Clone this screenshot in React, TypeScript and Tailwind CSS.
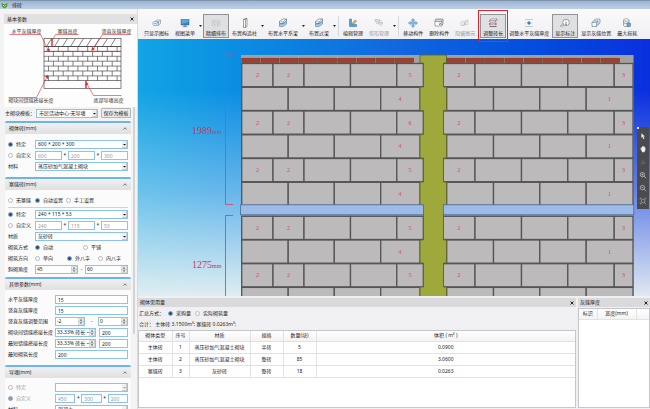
import React from 'react';

interface ChildrenProps {
  children: React.ReactNode;
}

/* ---------- Small form controls ---------- */

interface RadioProps {
  name: string;
  label: string;
  checked?: boolean;
  disabled?: boolean;
}

function Radio({ name, label, checked, disabled }: RadioProps) {
  return (
    <label className={disabled ? 'flex items-center gap-[3px] text-[#999]' : 'flex items-center gap-[3px]'}>
      <input
        type="radio"
        name={name}
        defaultChecked={checked}
        disabled={disabled}
        className="h-[5px] w-[5px] shrink-0 appearance-none rounded-full border border-[#b4bac0] bg-white checked:border-[#8ea9c2] checked:bg-[#1b4f7d] disabled:checked:bg-[#999]"
      />
      {label}
    </label>
  );
}

interface SelectProps {
  label: string;
  value: string;
  disabled?: boolean;
}

function Select({ label, value, disabled }: SelectProps) {
  return (
    <div className="relative min-w-0 flex-1">
      <select
        aria-label={label}
        disabled={disabled}
        className="block h-[9px] w-full appearance-none border border-[#8cc3ec] bg-white pl-[2px] text-[#222] disabled:opacity-100"
      >
        <option>{value}</option>
      </select>
      <svg viewBox="0 0 10 14" className="pointer-events-none absolute top-[1px] right-[1px] h-[7px] w-[5px]">
        <rect width="10" height="14" fill="#f0f0f0" />
        <path d="M9.5 0V13.5H0" fill="none" stroke="#8a9199" />
        <path d="M2 6H8L5 9Z" fill={disabled ? '#999' : '#111'} />
      </svg>
    </div>
  );
}

interface TextInputProps {
  label: string;
  value: string;
  disabled?: boolean;
}

function TextInput({ label, value, disabled }: TextInputProps) {
  return (
    <input
      type="text"
      aria-label={label}
      defaultValue={value}
      disabled={disabled}
      className="h-[9px] w-0 min-w-0 flex-1 border border-[#8cc3ec] bg-white px-[2px] text-[#222] disabled:text-[#999]"
    />
  );
}

function Spinner({ label, value }: TextInputProps) {
  return (
    <div className="flex h-[9px] min-w-0 flex-1 border border-[#8cc3ec] bg-white">
      <input type="text" aria-label={label} defaultValue={value} className="w-0 min-w-0 flex-1 bg-transparent pl-px" />
      <button type="button" aria-label={`${label} 增减`} className="w-[6px] shrink-0">
        <svg viewBox="0 0 12 14" className="h-[7px] w-[6px]">
          <path d="M.5.5H11.5V13.5H.5ZM0 7H12" fill="#f4f4f4" stroke="#a6adb5" />
          <path d="M6 2.5L9 5H3ZM6 11.5L9 9H3Z" fill="#333" />
        </svg>
      </button>
    </div>
  );
}

function Triple({ label, values }: { label: string; values: string[] }) {
  return (
    <div className="flex min-w-0 flex-1 items-center">
      {values.map((v, i) => (
        <React.Fragment key={i}>
          {i > 0 && <span className="w-[6px] text-center">*</span>}
          <TextInput label={`${label} ${i + 1}`} value={v} disabled />
        </React.Fragment>
      ))}
    </div>
  );
}

/* ---------- Left parameter panel ---------- */

function Row({ children }: ChildrenProps) {
  return <div className="flex h-[11px] items-center">{children}</div>;
}

function Name({ children }: ChildrenProps) {
  return <div className="w-[27px] shrink-0">{children}</div>;
}

function WideName({ children }: ChildrenProps) {
  return <div className="w-[47px] shrink-0">{children}</div>;
}

interface CardProps extends ChildrenProps {
  title: string;
  className: string;
}

function Card({ title, className, children }: CardProps) {
  return (
    <section className="shrink-0 rounded-t-[2px] border-t-2 border-[#6db4ee] bg-[#fbfbfb]">
      <button
        type="button"
        className="flex h-[11px] w-full items-center justify-between bg-linear-to-b from-[#f0f0f0] to-[#e0e0e1] px-1"
      >
        {title}
        <svg viewBox="0 0 8 6" className="h-[3px] w-1">
          <path d="M1 5L4 1.5L7 5" fill="none" stroke="#444" strokeWidth="1.4" />
        </svg>
      </button>
      <div className={className}>{children}</div>
    </section>
  );
}

function WallDiagram() {
  const hatch = [46, 54, 62, 70, 78, 86, 94, 102, 110];
  const courses = [0, 1, 2, 3, 4, 5, 6];
  const joints = [0, 1, 2, 3, 4, 5, 6, 7];
  return (
    <svg viewBox="4 24 132 83" className="block h-[83px] w-full shrink-0 bg-[#fdfdfd]">
      <g fill="none" stroke="#333" strokeWidth="0.6">
        <rect x="43.5" y="38.5" width="77" height="50" />
        <path d="M43.5 46.5H120.5M43.5 80.5H120.5" />
        {hatch.map((x) => (
          <path key={x} d={`M${x} 46.5L${x + 5} 38.5`} />
        ))}
        {courses.map((c) => (
          <path key={c} d={`M43.5 ${46.5 + c * 4.9}H120.5`} />
        ))}
        {courses.map((c) =>
          joints.map((j) => {
            const x = 48 + j * 9.8 + (c % 2) * 4.9;
            return x < 120 ? <path key={`${c}-${j}`} d={`M${x} ${46.5 + c * 4.9}v4.9`} /> : null;
          })
        )}
      </g>
      <g fill="none" stroke="#e0262e" strokeWidth="0.8">
        <path d="M43.5 51.4H120.5" />
        <path d="M9 34.5H40L48 51" strokeWidth="0.6" />
        <path d="M78 34.5H55L51.5 41" strokeWidth="0.6" />
        <path d="M130 34.5H102L92 50" strokeWidth="0.6" />
        <path d="M8 97.5H36L47 76" strokeWidth="0.6" />
        <path d="M121 95.5H93L86 83" strokeWidth="0.6" />
        <path d="M51.5 38.5V46.5M85.5 80.5V88.5" strokeWidth="1.4" />
      </g>
      <path d="M48.5 52.5L46 49.5L49.5 49ZM91 51L91.5 47L94.5 49ZM47.5 75L44.5 76.5L47.5 79ZM85.5 82L85 85.5L88 84Z" fill="#e0262e" />
      <g fill="#333" fontSize="5">
        <text x="11" y="33">水平灰缝厚度</text>
        <text x="57" y="33">塞缝高度</text>
        <text x="101" y="33">竖直灰缝厚度</text>
        <text x="8" y="102">砌块间错缝搭接长度</text>
        <text x="93" y="102">底部导墙高度</text>
      </g>
    </svg>
  );
}

function ParameterPanel() {
  return (
    <aside className="flex w-[138px] shrink-0 flex-col overflow-hidden border-r border-[#d5dbe2] bg-[#f3f3f4] pt-[5px] pl-1">
      <header className="flex h-[10px] shrink-0 items-center justify-between bg-[#e1e1e2] pr-[3px] pl-[3px]">
        <h2>基本参数</h2>
        <button type="button" aria-label="关闭基本参数">
          <CloseIcon />
        </button>
      </header>
      <WallDiagram />
      <div className="flex min-h-0 flex-1">
        <div className="flex min-h-0 min-w-0 flex-1 flex-col overflow-hidden pl-px">
          <div className="flex h-[14px] shrink-0 items-center pb-[2px]">
            <span className="w-[31px] shrink-0">主砌块模板：</span>
            <Select label="主砌块模板" value="市民活动中心-无导墙" />
            <button type="button" className="ml-[3px] h-[10px] w-[30px] shrink-0 rounded-[1px] border border-[#b5b5b5] bg-[#ededed]">
              保存为模板
            </button>
          </div>

          <Card title="砌体砖(mm)" className="px-[3px] pt-[5px] pb-[5px]">
            <Row>
              <Name><Radio name="block" label="特定" checked /></Name>
              <Select label="砌体砖规格" value="600 * 200 * 300" />
            </Row>
            <Row>
              <Name><Radio name="block" label="自定义" /></Name>
              <Triple label="砌体砖自定义" values={['600', '200', '300']} />
            </Row>
            <Row>
              <Name>材料</Name>
              <Select label="材料" value="蒸压砂加气混凝土砌块" />
            </Row>
          </Card>

          <Card title="塞缝砖(mm)" className="px-[3px] pt-[5px] pb-[2px]">
            <Row>
              <div className="grid grid-cols-[27px_31px_auto]">
                <Radio name="fill" label="无塞缝" />
                <Radio name="fill" label="自动设置" checked />
                <Radio name="fill" label="手工设置" />
              </div>
            </Row>
            <hr className="my-px border-[#e3c9cf]" />
            <Row>
              <Name><Radio name="fillSize" label="特定" checked /></Name>
              <Select label="塞缝砖规格" value="240 * 115 * 53" />
            </Row>
            <Row>
              <Name><Radio name="fillSize" label="自定义" /></Name>
              <Triple label="塞缝砖自定义" values={['240', '115', '53']} />
            </Row>
            <Row>
              <Name>材质</Name>
              <Select label="材质" value="灰砂砖" />
            </Row>
            <Row>
              <Name>砌筑方式</Name>
              <div className="grid grid-cols-[48px_auto]">
                <Radio name="mode" label="自动" checked />
                <Radio name="mode" label="平铺" />
              </div>
            </Row>
            <Row>
              <Name>砌筑方向</Name>
              <div className="grid grid-cols-[32px_31px_auto]">
                <Radio name="direction" label="单向" />
                <Radio name="direction" label="外八字" checked />
                <Radio name="direction" label="内八字" />
              </div>
            </Row>
            <Row>
              <Name>斜砌角度</Name>
              <Spinner label="斜砌角度最小" value="45" />
              <span className="w-[7px] text-center">-</span>
              <Spinner label="斜砌角度最大" value="60" />
            </Row>
          </Card>

          <Card title="其他参数(mm)" className="px-[3px] pt-1 pb-[5px]">
            <Row>
              <WideName>水平灰缝厚度</WideName>
              <TextInput label="水平灰缝厚度" value="15" />
            </Row>
            <Row>
              <WideName>竖直灰缝厚度</WideName>
              <TextInput label="竖直灰缝厚度" value="15" />
            </Row>
            <Row>
              <WideName>竖直灰缝调整范围</WideName>
              <Spinner label="竖直灰缝调整下限" value="-2" />
              <span className="w-[13px] text-center">-</span>
              <Spinner label="竖直灰缝调整上限" value="0" />
            </Row>
            <Row>
              <WideName>砌块间错缝搭接长度</WideName>
              <div className="flex w-[41px]"><Spinner label="砌块间错缝搭接比例" value="33.33% 砖长 ~" /></div>
              <div className="ml-[3px] flex flex-1"><TextInput label="砌块间错缝搭接长度" value="200" /></div>
            </Row>
            <Row>
              <WideName>最短错缝搭接长度</WideName>
              <div className="flex w-[41px]"><Spinner label="最短错缝搭接比例" value="33.33% 砖长 ~" /></div>
              <div className="ml-[3px] flex flex-1"><TextInput label="最短错缝搭接长度" value="200" /></div>
            </Row>
            <Row>
              <WideName>最短砌筑长度</WideName>
              <TextInput label="最短砌筑长度" value="200" />
            </Row>
          </Card>

          <Card title="导墙(mm)" className="px-[3px] pt-1 pb-[5px]">
            <Row>
              <WideName><Radio name="guide" label="特定" disabled /></WideName>
              <Select label="导墙规格" value="" disabled />
            </Row>
            <Row>
              <WideName><Radio name="guide" label="自定义" checked disabled /></WideName>
              <Triple label="导墙自定义" values={['450', '300', '200']} />
            </Row>
            <Row>
              <WideName>材料</WideName>
              <Select label="导墙材料" value="混凝土" />
            </Row>
          </Card>
        </div>
        <div className="w-[6px] shrink-0 px-[2px]">
          <div className="h-3/4 rounded-full bg-[#d3d4d6]" />
        </div>
      </div>
    </aside>
  );
}

/* ---------- Toolbar ---------- */

function CloseIcon() {
  return (
    <svg viewBox="0 0 8 8" className="h-1 w-1">
      <path d="M1 1L7 7M7 1L1 7" stroke="#111" strokeWidth="1.8" />
    </svg>
  );
}

const beamIcon = (
  <>
    <path d="M3 7L10 2H17L10 8H3Z" fill="#fff" stroke="#3b4650" />
    <path d="M3 7V11H10V8M10 11L17 6V2" fill="#dfe9f1" stroke="#3b4650" />
    <path d="M3 12L10 12L17 7V12L10 17H3Z" fill="#a9cdea" stroke="#2873ad" />
  </>
);

const icons: Record<string, React.ReactNode> = {
  iconsOnly: (
    <>
      <path d="M5 8L9 4H17V11L13 15H5Z" fill="#e9eff5" stroke="#6b7d8d" />
      <path d="M5 8H13V15M13 8L17 4" stroke="#6b7d8d" />
      <circle cx="6" cy="11" r="4.5" fill="#e6f0f8" stroke="#628fb3" />
      <path d="M3.5 11H8.5M10 6L14 11" stroke="#2e76ad" />
    </>
  ),
  view: (
    <>
      <rect x="2" y="3" width="16" height="11" fill="#2f86c9" stroke="#56616b" />
      <path d="M3 4H17V8L3 12Z" fill="#58a8e2" stroke="none" />
      <path d="M8 14H12V17H8ZM5 17.5H15" stroke="#56616b" />
    </>
  ),
  fine: (
    <>
      <rect x="2" y="4" width="16" height="12" stroke="#b3bcc4" strokeDasharray="2 1" />
      <path d="M2 8H18M2 12H18M7 4V8M13 4V8M5 8V12M10 8V12M15 8V12M7 12V16M13 12V16" stroke="#aab8c4" strokeDasharray="2 1" />
    </>
  ),
  column: <path d="M7 3L10 1H14V17L11 19H7ZM7 3H11V19M11 3L14 1" fill="#fff" stroke="#444" />,
  beam: beamIcon,
  edit: (
    <>
      <path d="M3 2V17H17V13H7V2Z" fill="#5aa0d6" stroke="#2871a8" />
      <path d="M9 10L14 4L17 6L12 12L9 12.5Z" fill="#ecc06c" stroke="#73624a" />
    </>
  ),
  rect: (
    <>
      <path d="M2 3H11V7H2ZM8 9H17V12H8Z" fill="#e3e3e3" stroke="#aaa" />
      <path d="M5 7V11H8M11 5H15V9M14 12V17" stroke="#b5b5b5" />
    </>
  ),
  move: (
    <path
      d="M10 1L13 4.5H11.2V8.8H15.5V7L19 10L15.5 13V11.2H11.2V15.5H13L10 19L7 15.5H8.8V11.2H4.5V13L1 10L4.5 7V8.8H8.8V4.5H7Z"
      fill="#a8d2ef"
      stroke="#1e73b4"
    />
  ),
  remove: (
    <>
      <path d="M2 4H16V16H2ZM2 7H16" fill="#fff" stroke="#4d5660" />
      <path d="M2 4L4 2H18V12L16 14" stroke="#4d5660" />
      <path d="M10 9L15 14M15 9L10 14" stroke="#dc3a32" strokeWidth="1.6" />
    </>
  ),
  hide: (
    <>
      <path d="M2 7H9V15H2ZM11 5H16V13H11Z" fill="#ededed" stroke="#bbb" />
      <path d="M5 16L16 3M8 12L12 14" stroke="#aaa" />
    </>
  ),
  length: (
    <>
      <path d="M3 5L6 2H18V5L15 8H3ZM15 5L18 2" fill="#fff" stroke="#4d5660" />
      <path d="M3 5H15V8" stroke="#4d5660" />
      <path d="M2 12H17M5 10L2 12L5 14M14 10L17 12L14 14" stroke="#dc3a32" strokeWidth="1.4" />
      <path d="M3 17H17" stroke="#4d5660" strokeWidth="1.6" />
    </>
  ),
  joint: (
    <>
      <path d="M2 3H18M2 17H18" stroke="#8ba0b2" />
      <path d="M10 6L14 10L10 14L6 10Z" fill="#2f83c2" stroke="#7db7df" />
      <path d="M2 10H5M15 10H18" stroke="#a3bacb" />
    </>
  ),
  info: (
    <>
      <circle cx="12" cy="9" r="6.5" fill="#fff" stroke="#46525d" />
      <path d="M12 8V13M12 5V6.5M10.5 13H13.5" stroke="#46525d" strokeWidth="1.4" />
      <path d="M1 16H7M3 13L1 16L3 18M6 10V16" stroke="#5c88a9" />
    </>
  ),
  position: (
    <>
      <path d="M6 5L9 2H18V10L15 13H6Z" fill="#dcebf6" stroke="#4d6b84" />
      <path d="M2 9L5 6H14V14L11 17H2Z" fill="#f7fafc" stroke="#3c5e79" />
      <path d="M2 9H11V17M11 9L14 6" stroke="#3c5e79" />
    </>
  ),
  loss: (
    <>
      <path d="M3 4V15C3 18 14 18 14 15V4" fill="#eceff1" stroke="#59636c" />
      <ellipse cx="8.5" cy="4" rx="5.5" ry="2.4" fill="#fff" stroke="#59636c" />
      <path d="M3 9C4 11.5 13 11.5 14 9" stroke="#59636c" />
      <rect x="10" y="10" width="7" height="7" rx="1" fill="#69a7d4" stroke="#2c6fa2" />
    </>
  ),
};

interface ToolProps {
  icon: string;
  label: string;
  active?: boolean;
  disabled?: boolean;
  menu?: boolean;
  highlighted?: boolean;
}

function Tool({ icon, label, active, disabled, menu, highlighted }: ToolProps) {
  const base = 'relative flex h-[24px] shrink-0 flex-col items-center justify-between border px-[2px] pt-[3px] whitespace-nowrap';
  const look = active ? 'border-[#8f9396] bg-[#dfe0e2]' : 'border-transparent';
  return (
    <>
      <button type="button" disabled={disabled} className={`${base} ${look} ${disabled ? 'text-[#999]' : 'text-[#222]'}`}>
        <svg viewBox="0 0 20 20" fill="none" className="h-[10px] w-[10px]">
          {icons[icon]}
        </svg>
        {label}
        {highlighted && <span className="absolute -inset-x-[3px] -inset-y-[5px] border border-[#e8202c]" />}
      </button>
      {menu && (
        <svg viewBox="0 0 10 6" className="mx-px h-[2px] w-[3px] shrink-0">
          <path d="M0 0H10L5 6Z" fill="#222" />
        </svg>
      )}
    </>
  );
}

function Separator() {
  return <div className="mx-px h-[20px] w-px shrink-0 bg-[#d6d8dc]" />;
}

function Toolbar() {
  return (
    <nav className="relative z-10 flex h-[30px] shrink-0 items-end bg-linear-to-b from-[#fafafb] to-[#f0eff2] pb-px pl-[3px]">
      <div className="flex items-center">
        <Tool icon="iconsOnly" label="只显示图标" />
        <Tool icon="view" label="视图菜单" menu />
        <Tool icon="fine" label="精细排布" active />
        <Tool icon="column" label="布置构造柱" menu />
        <Tool icon="beam" label="布置水平系梁" menu />
        <Tool icon="beam" label="布置过梁" menu />
        <Separator />
        <Tool icon="edit" label="编辑管理" />
        <Tool icon="rect" label="矩形管理" disabled menu />
        <Separator />
        <Tool icon="move" label="移动构件" />
        <Tool icon="remove" label="删除构件" />
        <Tool icon="hide" label="隐藏图元" disabled />
        <div className="w-[2px]" />
        <Tool icon="length" label="调整砖长" active highlighted />
        <Tool icon="joint" label="调整水平灰缝厚度" />
        <Tool icon="info" label="显示标注" active />
        <Tool icon="position" label="显示灰缝位置" />
        <Tool icon="loss" label="最大损耗" />
      </div>
    </nav>
  );
}

/* ---------- Wall drawing ---------- */

interface Course {
  y: number;
  long: boolean;
  mark: string;
}

const courses: Course[] = [
  { y: 24.5, long: false, mark: '5' },
  { y: 48.3, long: true, mark: '4' },
  { y: 72, long: false, mark: '6' },
  { y: 95.8, long: true, mark: '4' },
  { y: 119.5, long: false, mark: '5' },
  { y: 143.3, long: true, mark: '4' },
  { y: 177.3, long: false, mark: '5' },
  { y: 201, long: true, mark: '4' },
  { y: 224.7, long: false, mark: '5' },
  { y: 248.4, long: true, mark: '' },
];

const edges = {
  leftShort: [103.7, 135, 166, 212.5, 258.8, 285.3],
  leftLong: [103.7, 150.2, 196.3, 242.7, 282],
  rightShort: [305.3, 337, 383.5, 429.8, 476.2, 495],
  rightLong: [308.7, 355.5, 401.8, 448.2, 495],
};

function Bricks({ y, xs }: { y: number; xs: number[] }) {
  return (
    <>
      {xs.slice(0, -1).map((x, i) => (
        <rect key={x} x={x} y={y} width={xs[i + 1] - x} height="23.2" />
      ))}
    </>
  );
}

function WallCanvas() {
  const caps = [0, 1, 2, 3, 4, 5, 6, 7, 8];
  return (
    <svg viewBox="0 0 512 257" preserveAspectRatio="xMidYMid slice" className="absolute inset-0 h-full w-full">
      <path d="M103 16H285V257H103ZM305 16H495.5V257H305Z" fill="#a3a19f" />
      <g fill="#bcbabb" stroke="#555456" strokeWidth="1.3">
        {courses.map((c) => (
          <React.Fragment key={c.y}>
            <Bricks y={c.y} xs={c.long ? edges.leftLong : edges.leftShort} />
            <Bricks y={c.y} xs={c.long ? edges.rightLong : edges.rightShort} />
          </React.Fragment>
        ))}
      </g>
      {/* structural column, toothed into every second course */}
      <path
        d="M282 16H308.5V24H305.5V48H308.5V71.5H305.5V95.5H308.5V119H305.5V143H308.5V166H305.5V201H308.5V224H305.5V248H308.5V258H282V248H285.5V224H282V201H285.5V166H282V143H285.5V119H282V95.5H285.5V71.5H282V48H285.5V24H282Z"
        fill="#9ea83b"
        stroke="#5c6130"
        strokeWidth="0.8"
      />
      <g fill="#b23a24" stroke="#6a4038" strokeWidth="0.7">
        {caps.map((i) => (
          <rect key={`l${i}`} x={103.8 + i * 19.2} y="19.3" width="18" height="4" />
        ))}
        {caps.map((i) => (
          <rect key={`r${i}`} x={309 + i * 19.3} y="19.3" width="18" height="4" />
        ))}
      </g>
      <g fill="#9cbbe8" stroke="#4d6a92" strokeWidth="0.8">
        <rect x="102.5" y="165.8" width="183" height="10" />
        <rect x="305.3" y="165.8" width="190.5" height="10" />
      </g>
      <g fill="#e04458" fontSize="6" textAnchor="middle" className="font-['Liberation_Serif',serif]">
        {courses.map((c) =>
          c.long ? (
            <React.Fragment key={c.y}>
              <text x="262" y={c.y + 13.5}>{c.mark}</text>
              <text x="471.5" y={c.y + 13.5}>{c.mark && '1'}</text>
            </React.Fragment>
          ) : (
            <React.Fragment key={c.y}>
              <text x="119.5" y={c.y + 13.5}>2</text>
              <text x="150.5" y={c.y + 13.5}>2</text>
              <text x="272" y={c.y + 13.5}>{c.mark}</text>
              <text x="321" y={c.y + 13.5}>2</text>
              <text x="485.5" y={c.y + 13.5}>3</text>
            </React.Fragment>
          )
        )}
      </g>
      <path d="M95 16H87.5V165.5H95M95 176.5H87.5V258" fill="none" stroke="#c84c7c" strokeWidth="0.9" />
      <g fill="#cc3566" fontSize="10" className="font-['Liberation_Serif',serif]">
        <text x="54" y="95">1989<tspan fontSize="6">mm</tspan></text>
        <text x="54" y="229">1275<tspan fontSize="6">mm</tspan></text>
      </g>
    </svg>
  );
}

const canvasTools = [
  { label: '选择', shape: <path d="M6 3L15 11L11 11.5L13.5 17L11 18L9 12.5L6 15Z" fill="#eee" stroke="none" /> },
  { label: '平移', shape: <path d="M5 11L3 9.5L4.5 8L6 9V5H8V3H10V3H12V4H14V6H16V13L13 18H8Z" fill="#eee" stroke="none" /> },
  { label: '旋转', shape: <path d="M3 16L9 12L10 4M9 12L17 13M7 15L14 10" stroke="#888" /> },
  { label: '放大', shape: <path d="M14 9A5.5 5.5 0 1 1 3 9A5.5 5.5 0 1 1 14 9M12.5 13L18 18M8.5 6.5V11.5M6 9H11" stroke="#ddd" strokeWidth="1.5" /> },
  { label: '缩小', shape: <path d="M14 9A5.5 5.5 0 1 1 3 9A5.5 5.5 0 1 1 14 9M12.5 13L18 18M6 9H11" stroke="#ddd" strokeWidth="1.5" /> },
  { label: '全图', shape: <path d="M15 10A4.5 4.5 0 1 1 6 10A4.5 4.5 0 1 1 15 10M13.5 14L18 18M3 7V3H7M3 13V17H7M14 3H17V6" stroke="#ccc" strokeWidth="1.3" /> },
];

function Workspace() {
  return (
    <main className="relative min-h-0 flex-1 overflow-hidden bg-linear-to-r from-[#12a4e4] via-[#1268de] to-[#0b2fdd]">
      <div className="absolute inset-0 bg-linear-to-b from-transparent from-20% via-[#dbe8f5]/45 via-60% to-[#eaf2f2]/95" />
      <WallCanvas />
      <div className="absolute top-[88px] right-px flex flex-col bg-[#4b4b4d] py-[2px]">
        {canvasTools.map((t) => (
          <button key={t.label} type="button" aria-label={t.label} className="flex h-[13px] w-[12px] items-center justify-center">
            <svg viewBox="0 0 20 20" fill="none" className="h-2 w-2">
              {t.shape}
            </svg>
          </button>
        ))}
        <span className="absolute top-0 left-0 h-[2px] w-[2px] bg-[#e6e6f2]" />
      </div>
    </main>
  );
}

/* ---------- Bottom result panels ---------- */

const usage = [
  ['主体砖', '1', '蒸压砂加气混凝土砌块', '半砖', '5', '0.0900'],
  ['主体砖', '2', '蒸压砂加气混凝土砌块', '整砖', '85', '3.0600'],
  ['塞缝砖', '3', '灰砂砖', '整砖', '18', '0.0263'],
];

function PanelHeader({ title }: { title: string }) {
  return (
    <header className="flex h-[9px] shrink-0 items-center justify-between bg-[#dadadc] px-[2px]">
      <h2>{title}</h2>
      <button type="button" aria-label={`关闭${title}`}>
        <CloseIcon />
      </button>
    </header>
  );
}

function UsagePanel() {
  return (
    <section className="flex min-w-0 flex-1 flex-col">
      <PanelHeader title="砌体需用量" />
      <div className="flex h-[12px] items-center gap-1 px-px">
        <span>汇总方式：</span>
        <Radio name="summary" label="采购量" checked />
        <Radio name="summary" label="实际砌筑量" />
      </div>
      <p className="h-[11px] px-px leading-[10px]">合计： 主体砖 3.1500m³; 塞缝砖 0.0263m³;</p>
      <div className="mb-px min-h-0 flex-1 border border-[#c4c6ca] bg-white">
        <table className="w-full table-fixed border-collapse text-center">
          <thead>
            <tr className="h-[10px] bg-linear-to-b from-white to-[#f3f3f4]">
              <th className="w-[33px] border-r border-b border-[#e2e2e4] font-normal">砌体类型</th>
              <th className="w-[17px] border-r border-b border-[#e2e2e4] font-normal">序号</th>
              <th className="w-[61px] border-r border-b border-[#e2e2e4] font-normal">材质</th>
              <th className="w-[33px] border-r border-b border-[#e2e2e4] font-normal">规格</th>
              <th className="w-[33px] border-r border-b border-[#e2e2e4] font-normal">数量(块)</th>
              <th className="border-b border-[#e2e2e4] font-normal">体积 ( m³ )</th>
            </tr>
          </thead>
          <tbody>
            {usage.map((row) => (
              <tr key={row[1]} className="h-3">
                {row.map((cell, i) => (
                  <td key={i} className="border-r border-b border-[#e2e2e4] last:border-r-0">{cell}</td>
                ))}
              </tr>
            ))}
          </tbody>
        </table>
      </div>
    </section>
  );
}

function JointPanel() {
  return (
    <section className="flex w-[72px] shrink-0 flex-col">
      <PanelHeader title="灰缝厚度" />
      <div className="mt-px mb-px min-h-0 flex-1 border border-[#c4c6ca] bg-white">
        <table className="w-full table-fixed border-collapse">
          <thead>
            <tr className="h-[10px] bg-linear-to-b from-white to-[#f3f3f4]">
              <th className="w-[18px] border-r border-b border-[#e2e2e4] font-normal">标识</th>
              <th className="border-r border-b border-[#e2e2e4] font-normal">宽度(mm)</th>
              <th className="w-[13px] border-b border-[#e2e2e4]" />
            </tr>
          </thead>
        </table>
      </div>
    </section>
  );
}

export default function App() {
  return (
    <div className="flex h-screen flex-col overflow-hidden bg-[#f0f0f2] font-['Noto_Sans','Noto_Sans_CJK_SC',sans-serif] text-[5px] leading-[7px] text-[#222]">
      <header className="flex h-[9px] shrink-0 items-center gap-1 border-t border-[#7f95ae] bg-linear-to-b from-[#9bb3d1] to-[#bed0e6] pl-px">
        <svg viewBox="0 0 14 14" className="h-[7px] w-[7px]">
          <path d="M1 2L7 5L13 2L12 9L7 13L2 9Z" fill="#4e9b22" />
          <path d="M4 6L7 9L10 6" fill="none" stroke="#d9efb4" strokeWidth="1.5" />
        </svg>
        <h1>排砖</h1>
      </header>
      <div className="flex min-h-0 flex-1">
        <ParameterPanel />
        <div className="flex min-w-0 flex-1 flex-col">
          <Toolbar />
          <Workspace />
          <div className="flex h-[113px] shrink-0 gap-[2px] pt-[2px]">
            <UsagePanel />
            <JointPanel />
          </div>
        </div>
      </div>
    </div>
  );
}
